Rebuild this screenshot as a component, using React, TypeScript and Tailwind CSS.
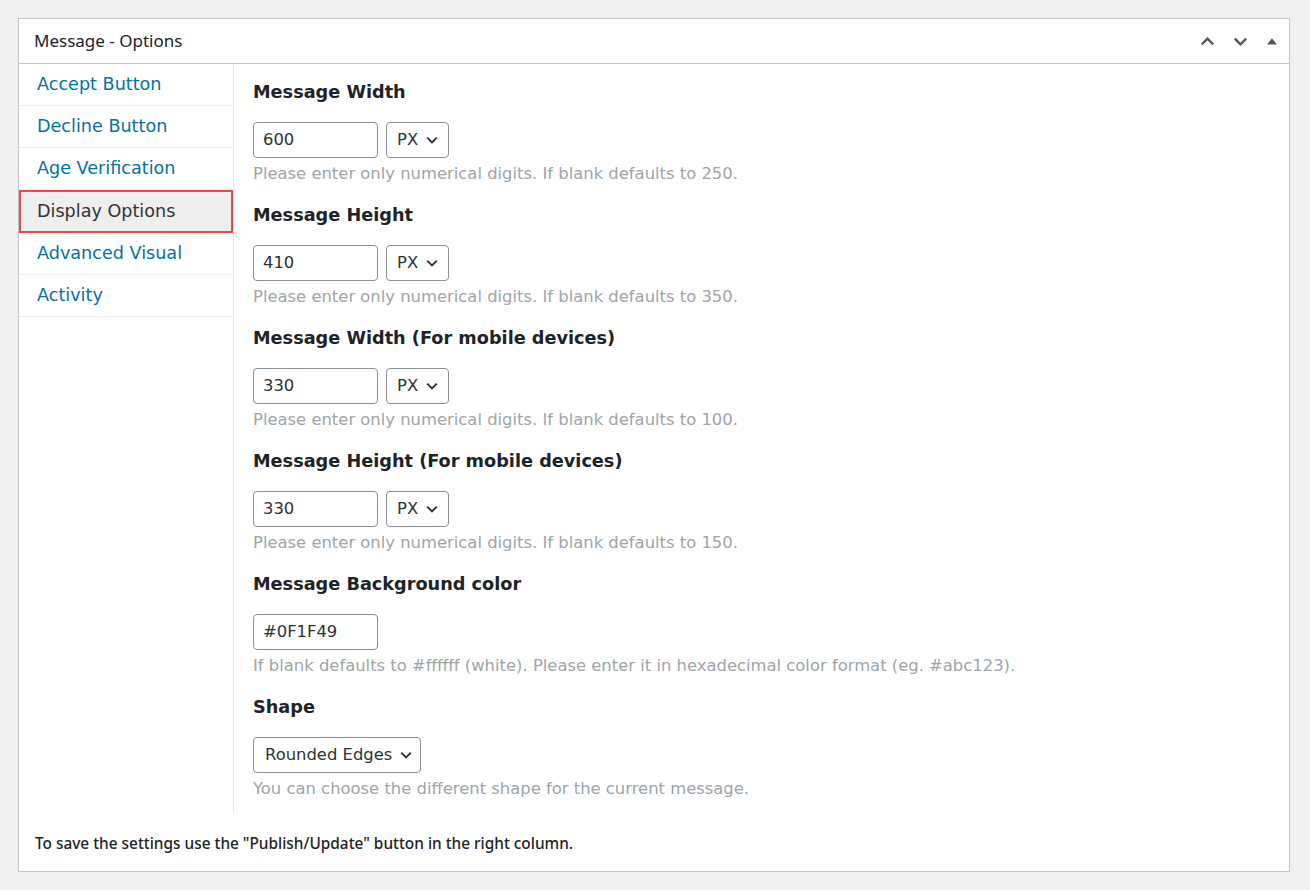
import React from "react";

const TABS = ["Accept Button", "Decline Button", "Age Verification", "Display Options", "Advanced Visual", "Activity"];

const FIELDS = [
  { label: "Message Width", value: "600", help: "Please enter only numerical digits. If blank defaults to 250.", unit: true },
  { label: "Message Height", value: "410", help: "Please enter only numerical digits. If blank defaults to 350.", unit: true },
  { label: "Message Width (For mobile devices)", value: "330", help: "Please enter only numerical digits. If blank defaults to 100.", unit: true },
  { label: "Message Height (For mobile devices)", value: "330", help: "Please enter only numerical digits. If blank defaults to 150.", unit: true },
  {
    label: "Message Background color",
    value: "#0F1F49",
    help: "If blank defaults to #ffffff (white). Please enter it in hexadecimal color format (eg. #abc123).",
    unit: false,
  },
];

function Chevron({ dir = "down", className = "" }: { dir?: "up" | "down"; className?: string }) {
  return (
    <svg viewBox="0 0 20 20" className={className} fill="none" stroke="currentColor" strokeWidth={2.4}>
      {dir === "down" ? <path d="M4 7l6 6 6-6" /> : <path d="M4 13l6-6 6 6" />}
    </svg>
  );
}

function Select({ text, className = "" }: { text: string; className?: string }) {
  return (
    <div
      className={`h-9 flex items-center justify-between whitespace-nowrap rounded border border-[#8c8f94] bg-white pl-[10px] pr-2 text-[16.4px] text-[#2c3338] ${className}`}
    >
      <span>{text}</span>
      <Chevron className="w-[16px] h-[16px] shrink-0 text-[#2c3338] ml-1" />
    </div>
  );
}

export default function App() {
  const active = "Display Options";
  return (
    <div className="min-h-[890px] bg-[#f0f0f1] pt-[18px] px-[18px] font-['DejaVu_Sans',Verdana,sans-serif]">
      <div className="w-[1272px] border border-[#c3c4c7] bg-white">
        <div className="h-[45px] flex items-center justify-between border-b border-[#c3c4c7] pl-[15px] pr-[10px]">
          <h2 className="text-[17px] text-[#1d2327] font-['Noto_Sans','Open_Sans',sans-serif]">Message - Options</h2>
          <div className="flex items-center gap-[14px] text-[#50575e]">
            <Chevron dir="up" className="w-[19px] h-[19px]" />
            <Chevron dir="down" className="w-[19px] h-[19px]" />
            <svg viewBox="0 0 20 20" className="w-[14px] h-[14px] ml-[1px]" fill="currentColor">
              <path d="M3 15L10 6l7 9z" />
            </svg>
          </div>
        </div>

        <div className="flex">
          <ul className="w-[215px] shrink-0 border-r border-[#e5e5e5]">
            {TABS.map((t) =>
              t === active ? (
                <li
                  key={t}
                  className="h-[43px] flex items-center pl-4 border-2 border-[#f24646] bg-[#eeeeee] text-[17.6px] text-[#333]"
                >
                  {t}
                </li>
              ) : (
                <li key={t} className="h-[42px] flex items-center pl-[18px] border-b border-[#eeeeee] text-[17.6px] text-[#0073aa]">
                  {t}
                </li>
              )
            )}
          </ul>

          <div className="flex-1 pl-[19px] pt-4 pb-3">
            {FIELDS.map((f) => (
              <div key={f.label} className="mb-[17px]">
                <h3 className="text-[17.7px] leading-6 font-bold text-[#1d2327]">{f.label}</h3>
                <div className="mt-[18px] flex gap-2">
                  <div className="w-[125px] h-9 flex items-center rounded border border-[#8c8f94] px-[9px] text-[16.4px] text-[#2c3338]">
                    {f.value}
                  </div>
                  {f.unit && <Select text="PX" className="w-[63px]" />}
                </div>
                <p className="mt-1 text-[16.4px] leading-6 text-[#a0a5aa]">{f.help}</p>
              </div>
            ))}
            <div>
              <h3 className="text-[17.7px] leading-6 font-bold text-[#1d2327]">Shape</h3>
              <div className="mt-[18px] flex">
                <Select text="Rounded Edges" className="w-[168px] pl-[11px] pr-[6px]" />
              </div>
              <p className="mt-1 text-[16.4px] leading-6 text-[#a0a5aa]">You can choose the different shape for the current message.</p>
            </div>
          </div>
        </div>

        <div className="pl-4 pt-[21px] pb-[17px] text-[15.4px] leading-5 font-medium text-[#1d2327] font-['Noto_Sans','Open_Sans',sans-serif]">
          To save the settings use the "Publish/Update" button in the right column.
        </div>
      </div>
    </div>
  );
}
